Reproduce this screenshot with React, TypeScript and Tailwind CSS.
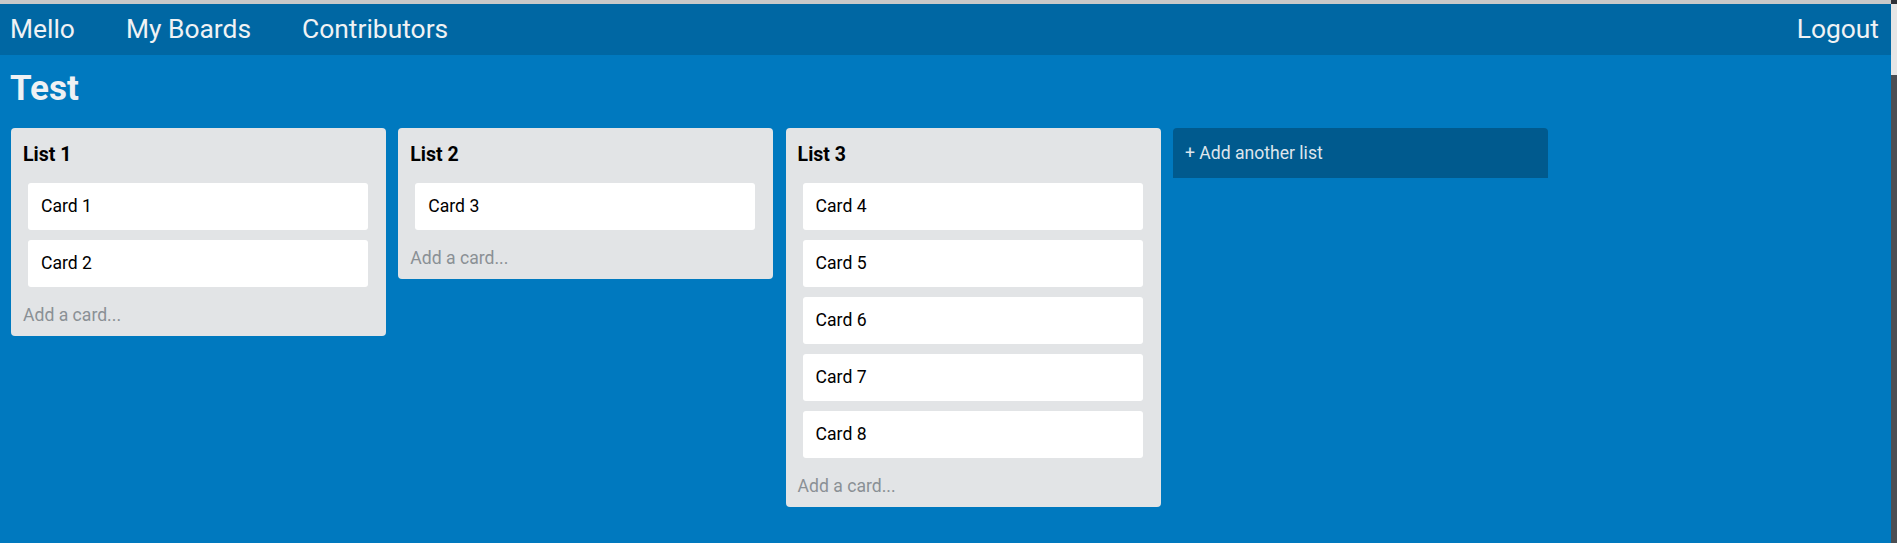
import React from "react";

type List = { title: string; cards: string[] };

const lists: List[] = [
  { title: "List 1", cards: ["Card 1", "Card 2"] },
  { title: "List 2", cards: ["Card 3"] },
  { title: "List 3", cards: ["Card 4", "Card 5", "Card 6", "Card 7", "Card 8"] },
];

function ListColumn({ list }: { list: List }) {
  return (
    <div className="w-[375px] shrink-0 rounded-[4px] bg-[#e2e4e6] px-[12px] pt-[15px] pb-[9px]">
      <div className="h-[24px] text-[19.5px] font-bold leading-[24px] text-black">{list.title}</div>
      <div className="mt-[16px] ml-[5px] flex w-[340px] flex-col gap-[10px]">
        {list.cards.map((c) => (
          <div
            key={c}
            className="flex h-[47px] items-center rounded-[3px] bg-white pl-[13px] text-[17.6px] text-black"
          >
            {c}
          </div>
        ))}
      </div>
      <div className="mt-[16px] h-[24px] text-[17.6px] leading-[24px] text-[#8a9095]">Add a card...</div>
    </div>
  );
}

export default function App() {
  return (
    <div
      className="flex h-[543px] w-[1897px] overflow-hidden"
      style={{ fontFamily: "Roboto, 'Noto Sans', sans-serif" }}
    >
      <div className="flex h-full w-[1891px] flex-col bg-[#0079bf]">
        <div className="h-[4px] shrink-0 bg-[#c9c9c9]" />
        <nav className="flex h-[51px] shrink-0 items-center justify-between bg-[#0067a3] pl-[10px] pr-[12px] text-[26.4px] text-[#f0f2f4]">
          <div className="flex items-center gap-[51px]">
            <span>Mello</span>
            <span>My Boards</span>
            <span>Contributors</span>
          </div>
          <span>Logout</span>
        </nav>
        <h1 className="mt-[13px] h-[42px] pl-[10px] text-[35px] font-bold leading-[42px] text-[#eef1f4]">Test</h1>
        <div className="mt-[18px] flex items-start gap-[12.3px] pl-[11px]">
          {lists.map((l) => (
            <ListColumn key={l.title} list={l} />
          ))}
          <div className="flex h-[50px] w-[375px] shrink-0 items-center rounded-t-[4px] bg-[#005a8e] pl-[12px] text-[17.6px] text-[#dde5ec]">
            + Add another list
          </div>
        </div>
      </div>
      <div className="flex h-full w-[6px] flex-col bg-[#4b4e53]">
        <div className="h-[4px] bg-[#2f3238]" />
        <div className="h-[71px] bg-[#e6e6e6]" />
      </div>
    </div>
  );
}
